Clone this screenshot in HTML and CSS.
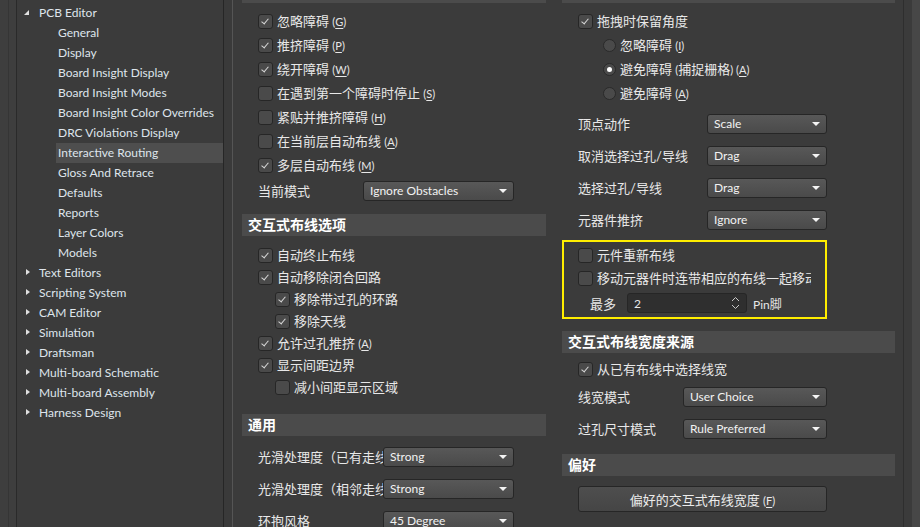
FILE: index.html
```html
<!DOCTYPE html>
<html lang="zh-CN">
<head>
  <meta charset="UTF-8">
  <title>Preferences - Interactive Routing</title>
  <link rel="stylesheet" href="styles.css">
</head>
<body>
  <div class="rail"><div class="rail-line"></div></div>

  <nav class="tree">
    <div class="node"><span class="twisty open"></span>PCB Editor</div>
    <div class="leaf">General</div>
    <div class="leaf">Display</div>
    <div class="leaf">Board Insight Display</div>
    <div class="leaf">Board Insight Modes</div>
    <div class="leaf">Board Insight Color Overrides</div>
    <div class="leaf">DRC Violations Display</div>
    <div class="leaf selected">Interactive Routing</div>
    <div class="leaf">Gloss And Retrace</div>
    <div class="leaf">Defaults</div>
    <div class="leaf">Reports</div>
    <div class="leaf">Layer Colors</div>
    <div class="leaf">Models</div>
    <div class="node"><span class="twisty"></span>Text Editors</div>
    <div class="node"><span class="twisty"></span>Scripting System</div>
    <div class="node"><span class="twisty"></span>CAM Editor</div>
    <div class="node"><span class="twisty"></span>Simulation</div>
    <div class="node"><span class="twisty"></span>Draftsman</div>
    <div class="node"><span class="twisty"></span>Multi-board Schematic</div>
    <div class="node"><span class="twisty"></span>Multi-board Assembly</div>
    <div class="node"><span class="twisty"></span>Harness Design</div>
  </nav>

  <div class="splitter"></div>

  <main class="content">
    <section class="col col-left">
      <div class="head cut"></div>
      <div class="group first">
        <div class="check on"><span class="box"></span><span class="txt">忽略障碍 <span class="acc">(<u>G</u>)</span></span></div>
        <div class="check on"><span class="box"></span><span class="txt">推挤障碍 <span class="acc">(<u>P</u>)</span></span></div>
        <div class="check on"><span class="box"></span><span class="txt">绕开障碍 <span class="acc">(<u>W</u>)</span></span></div>
        <div class="check"><span class="box"></span><span class="txt">在遇到第一个障碍时停止 <span class="acc">(<u>S</u>)</span></span></div>
        <div class="check"><span class="box"></span><span class="txt">紧贴并推挤障碍 <span class="acc">(<u>H</u>)</span></span></div>
        <div class="check"><span class="box"></span><span class="txt">在当前层自动布线 <span class="acc">(<u>A</u>)</span></span></div>
        <div class="check on"><span class="box"></span><span class="txt">多层自动布线 <span class="acc">(<u>M</u>)</span></span></div>
        <div class="field mode">
          <span class="label">当前模式</span>
          <span class="select">Ignore Obstacles</span>
        </div>
      </div>

      <div class="head options">交互式布线选项</div>
      <div class="group dense">
        <div class="check on"><span class="box"></span><span class="txt">自动终止布线</span></div>
        <div class="check on"><span class="box"></span><span class="txt">自动移除闭合回路</span></div>
        <div class="check on sub"><span class="box"></span><span class="txt">移除带过孔的环路</span></div>
        <div class="check on sub"><span class="box"></span><span class="txt">移除天线</span></div>
        <div class="check on"><span class="box"></span><span class="txt">允许过孔推挤 <span class="acc">(<u>A</u>)</span></span></div>
        <div class="check on"><span class="box"></span><span class="txt">显示间距边界</span></div>
        <div class="check sub"><span class="box"></span><span class="txt">减小间距显示区域</span></div>
      </div>

      <div class="head general">通用</div>
      <div class="group fields wide">
        <div class="field"><span class="label">光滑处理度（已有走线）</span><span class="select">Strong</span></div>
        <div class="field"><span class="label">光滑处理度（相邻走线）</span><span class="select">Strong</span></div>
        <div class="field"><span class="label">环抱风格</span><span class="select">45 Degree</span></div>
      </div>
    </section>

    <section class="col col-right">
      <div class="head cut"></div>
      <div class="group first">
        <div class="check on"><span class="box"></span><span class="txt">拖拽时保留角度</span></div>
        <div class="radio"><span class="dot"></span><span class="txt">忽略障碍 <span class="acc">(<u>I</u>)</span></span></div>
        <div class="radio on"><span class="dot"></span><span class="txt">避免障碍 <span class="acc">(</span>捕捉栅格<span class="acc">) (<u>A</u>)</span></span></div>
        <div class="radio"><span class="dot"></span><span class="txt">避免障碍 <span class="acc">(<u>A</u>)</span></span></div>
      </div>
      <div class="group fields drag">
        <div class="field"><span class="label">顶点动作</span><span class="select">Scale</span></div>
        <div class="field"><span class="label">取消选择过孔/导线</span><span class="select">Drag</span></div>
        <div class="field"><span class="label">选择过孔/导线</span><span class="select">Drag</span></div>
        <div class="field"><span class="label">元器件推挤</span><span class="select">Ignore</span></div>
      </div>

      <div class="highlight">
        <div class="check"><span class="box"></span><span class="txt">元件重新布线</span></div>
        <div class="check clip"><span class="box"></span><span class="txt">移动元器件时连带相应的布线一起移动</span></div>
        <div class="spin-row">
          <span class="label">最多</span>
          <span class="spin">2
            <svg class="chev" width="9" height="14" viewBox="0 0 9 14"><path d="M1 5 L4.5 1.5 L8 5 M1 9 L4.5 12.5 L8 9" fill="none" stroke="#c8c8c8" stroke-width="1"/></svg>
          </span>
          <span class="unit">Pin脚</span>
        </div>
      </div>

      <div class="head source">交互式布线宽度来源</div>
      <div class="group">
        <div class="check on short"><span class="box"></span><span class="txt">从已有布线中选择线宽</span></div>
        <div class="field width"><span class="label">线宽模式</span><span class="select">User Choice</span></div>
        <div class="field width"><span class="label">过孔尺寸模式</span><span class="select">Rule Preferred</span></div>
      </div>

      <div class="head pref">偏好</div>
      <div class="group">
        <button class="btn">偏好的交互式布线宽度 <span class="acc">(<u>F</u>)</span></button>
      </div>
    </section>
  </main>

  <div class="scroll"></div>
</body>
</html>
```

FILE: styles.css
```css
body {
  margin: 0;
  width: 920px;
  height: 527px;
  overflow: hidden;
  display: flex;
  background-color: #3b3b3b;
  color: #e8e8e8;
  font-family: "Lato", "Noto Sans CJK SC", sans-serif;
  font-size: 12px;
}

/* left rail */
.rail {
  width: 16px;
  flex: none;
  border-right: 1px solid #2a2a2a;
  background-color: #3e3e3e;
  display: flex;
}
.rail-line {
  width: 8px;
  border-right: 1px solid #353535;
}

/* tree */
.tree {
  width: 206px;
  flex: none;
  padding-top: 3px;
  border-right: 1px solid #262626;
  color: #dfe5ec;
}
.node, .leaf {
  height: 20px;
  line-height: 20px;
  white-space: nowrap;
}
.node {
  display: flex;
  align-items: center;
  padding-left: 7px;
}
.leaf {
  margin-left: 39px;
  padding-left: 2px;
}
.leaf.selected {
  background-color: #4e4e4e;
}
.twisty {
  width: 15px;
  height: 20px;
  position: relative;
}
.twisty::before {
  content: "";
  position: absolute;
  left: 2px;
  top: 6px;
  border-top: 3.5px solid transparent;
  border-bottom: 3.5px solid transparent;
  border-left: 4px solid #e0e0e0;
}
.twisty.open::before {
  left: 0;
  top: 7px;
  border-top: 0;
  border-left: 5px solid transparent;
  border-bottom: 5px solid #e0e0e0;
}

.splitter {
  width: 8px;
  flex: none;
  background-color: #3a3a3a;
  border-right: 1px solid #555555;
}

/* content columns */
.content {
  flex: none;
  width: 661px;
  padding-left: 9px;
  display: flex;
  gap: 16px;
  border-right: 1px solid #2e2e2e;
  overflow: hidden;
}
.col {
  flex: none;
  display: flex;
  flex-direction: column;
}
.col-left { width: 304px; }
.col-right { width: 333px; }

.head {
  height: 22px;
  line-height: 22px;
  padding-left: 6px;
  background-color: #4b4b4b;
  color: #ffffff;
  font-size: 14px;
  font-weight: bold;
  flex: none;
}
.head.cut { height: 3px; }
.head.options { margin-top: 11px; }
.head.general { margin-top: 16px; }
.head.source { margin-top: 12px; }
.head.pref { margin-top: 9px; }

.group.first { padding-top: 6px; }
.group.dense { padding-top: 8px; }
.group.dense .check { height: 22px; }
.group.fields { padding-top: 5px; }
.group.drag { padding-top: 3px; }

.txt {
  font-size: 13px;
  white-space: nowrap;
  margin-bottom: 2px;
}
.acc {
  font-size: 11px;
}
.acc u {
  text-decoration-thickness: 1px;
  text-underline-offset: 2px;
}

/* checkbox */
.check {
  height: 24px;
  display: flex;
  align-items: center;
  padding-left: 16px;
}
.check.sub { padding-left: 33px; }
.check.short { height: 23px; padding-top: 5px; }
.box {
  width: 13px;
  height: 13px;
  flex: none;
  margin-right: 4px;
  border: 1px solid #262626;
  border-radius: 3px;
  background-color: #4a4a4a;
  position: relative;
}
.check.on .box::after {
  content: "";
  position: absolute;
  left: 4px;
  top: 2px;
  width: 3px;
  height: 6px;
  border-right: 1px solid #d8d8d8;
  border-bottom: 1px solid #d8d8d8;
  transform: rotate(40deg);
}

/* radio */
.radio {
  height: 24px;
  display: flex;
  align-items: center;
  padding-left: 41px;
}
.dot {
  width: 11px;
  height: 11px;
  flex: none;
  margin-right: 4px;
  border: 1px solid #2a2a2a;
  border-radius: 50%;
  background-color: #4a4a4a;
  position: relative;
}
.radio.on .dot::after {
  content: "";
  position: absolute;
  left: 3px;
  top: 3px;
  width: 5px;
  height: 5px;
  border-radius: 50%;
  background-color: #ffffff;
}

/* label + dropdown */
.field {
  height: 32px;
  display: flex;
  align-items: center;
  padding-left: 16px;
}
.field .label {
  flex: none;
  width: 129px;
  font-size: 13px;
  white-space: nowrap;
  overflow: hidden;
  margin-bottom: 2px;
}
.field.mode { height: 24px; margin-top: 2px; }
.field.mode .label { width: 105px; }
.fields.wide .label { width: 125px; }
.field.width .label { width: 105px; }

.select {
  flex: none;
  box-sizing: border-box;
  height: 20px;
  line-height: 18px;
  padding-left: 6px;
  border: 1px solid #262626;
  border-radius: 3px;
  background: linear-gradient(#585858, #4a4a4a);
  color: #f2f2f2;
  position: relative;
}
.select::after {
  content: "";
  position: absolute;
  right: 6px;
  top: 7px;
  border-left: 4.5px solid transparent;
  border-right: 4.5px solid transparent;
  border-top: 4.5px solid #f4f4f4;
}
.field.mode .select { width: 151px; }
.fields.wide .select { width: 131px; }
.drag .select { width: 120px; }
.field.width .select { width: 144px; }

/* yellow-outlined block */
.highlight {
  margin-top: 4px;
  width: 261px;
  border: 2px solid #ffee00;
  padding: 1px 0 4px;
  flex: none;
}
.highlight .check { padding-left: 14px; }
.highlight .check.clip {
  height: 22px;
  width: 233px;
  overflow: hidden;
}
.spin-row {
  margin-top: 4px;
  height: 20px;
  display: flex;
  align-items: center;
  padding-left: 26px;
}
.spin-row .label {
  width: 37px;
  font-size: 13px;
}
.spin {
  box-sizing: border-box;
  width: 120px;
  height: 20px;
  padding-left: 6px;
  display: flex;
  align-items: center;
  justify-content: space-between;
  padding-right: 6px;
  border: 1px solid #262626;
  border-radius: 3px;
  background-color: #2f2f2f;
  font-size: 12px;
}
.unit {
  margin-left: 6px;
  font-size: 12px;
}
.unit, .spin-row .label { white-space: nowrap; }

/* button */
.btn {
  margin: 10px 0 0 16px;
  width: 249px;
  height: 26px;
  border: 1px solid #262626;
  border-radius: 3px;
  background: linear-gradient(#4e4e4e, #454545);
  color: #ececec;
  font-family: inherit;
  font-size: 13px;
  padding: 0;
}

.scroll {
  flex: none;
  width: 8px;
  margin-left: 8px;
  background-color: #474747;
}
```
